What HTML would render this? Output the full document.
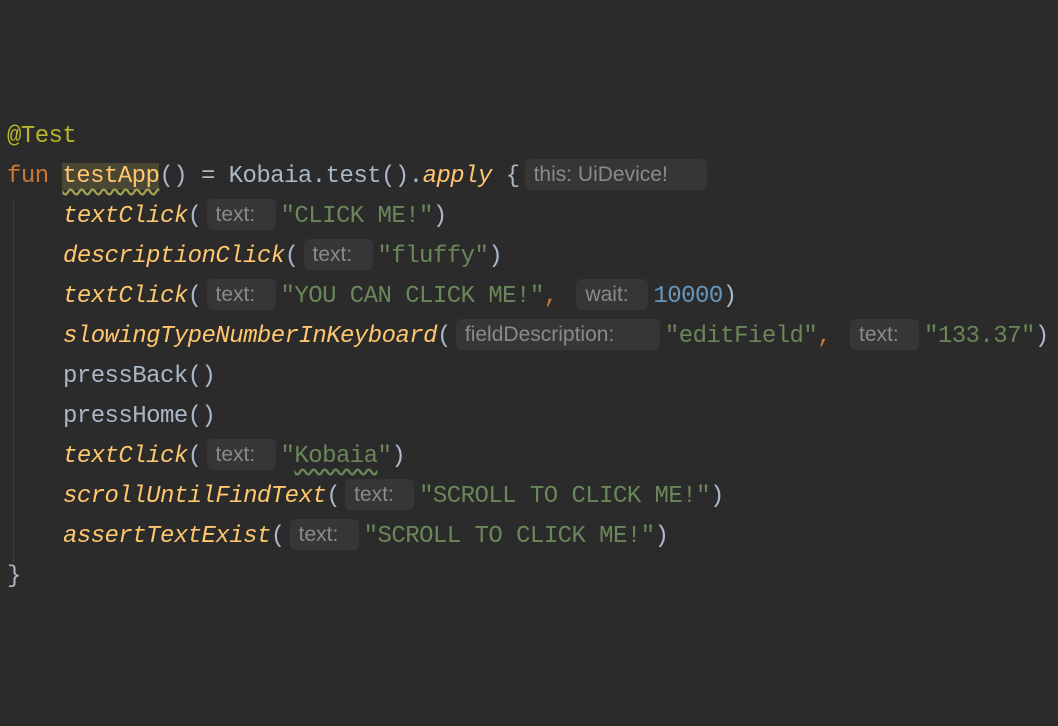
<!DOCTYPE html>
<html><head><meta charset="utf-8"><style>
body{margin:0;width:1058px;height:726px;background:#2b2b2b;overflow:hidden;position:relative}
.l{position:absolute;left:7px;height:40px;line-height:40px;font-family:"Liberation Mono",monospace;font-size:24px;letter-spacing:-0.55px;color:#a9b7c6;white-space:pre}
.in{left:63px}
.a{color:#bbb529}.k{color:#cc7832}.f{color:#ffc66d;font-style:italic}.fn{color:#ffc66d}.s{color:#6a8759}.n{color:#6897bb}
.h{display:inline-block;box-sizing:border-box;height:31px;line-height:31px;vertical-align:1px;background:#363636;border-radius:6px;color:#8a8a8a;font-family:"Liberation Sans",sans-serif;font-size:21px;letter-spacing:0;text-align:left;padding-left:9px;margin:0 5px 0 5px;font-style:normal}
.hl{background:#4a4735;text-decoration:underline wavy #a0a050;text-underline-offset:6px}
.gd{position:absolute;left:13px;top:198px;width:1px;height:364px;background:#3c3c3c}
</style></head><body>
<div class="gd"></div>
<div class="l a" style="top:117px">@Test</div>
<div class="l" style="top:157px"><span class="k">fun </span><span class="fn hl">testApp</span>() = Kobaia.test().<span class="f">apply</span> {<span class="h" style="width:182px">this: UiDevice!</span></div>
<div class="l in" style="top:197px"><span class="f">textClick</span>(<span class="h" style="width:69px">text:</span><span class="s">"CLICK ME!"</span>)</div>
<div class="l in" style="top:237px"><span class="f">descriptionClick</span>(<span class="h" style="width:69px">text:</span><span class="s">"fluffy"</span>)</div>
<div class="l in" style="top:277px"><span class="f">textClick</span>(<span class="h" style="width:69px">text:</span><span class="s">"YOU CAN CLICK ME!"</span><span class="k">, </span><span class="h" style="width:72px">wait:</span><span class="n">10000</span>)</div>
<div class="l in" style="top:317px"><span class="f">slowingTypeNumberInKeyboard</span>(<span class="h" style="width:204px">fieldDescription:</span><span class="s">"editField"</span><span class="k">, </span><span class="h" style="width:69px">text:</span><span class="s">"133.37"</span>)</div>
<div class="l in" style="top:357px">pressBack()</div>
<div class="l in" style="top:397px">pressHome()</div>
<div class="l in" style="top:437px"><span class="f">textClick</span>(<span class="h" style="width:69px">text:</span><span class="s">"<span style="text-decoration:underline wavy #6a8759;text-underline-offset:6px">Kobaia</span>"</span>)</div>
<div class="l in" style="top:477px"><span class="f">scrollUntilFindText</span>(<span class="h" style="width:69px">text:</span><span class="s">"SCROLL TO CLICK ME!"</span>)</div>
<div class="l in" style="top:517px"><span class="f">assertTextExist</span>(<span class="h" style="width:69px">text:</span><span class="s">"SCROLL TO CLICK ME!"</span>)</div>
<div class="l" style="top:557px">}</div>
</body></html>
